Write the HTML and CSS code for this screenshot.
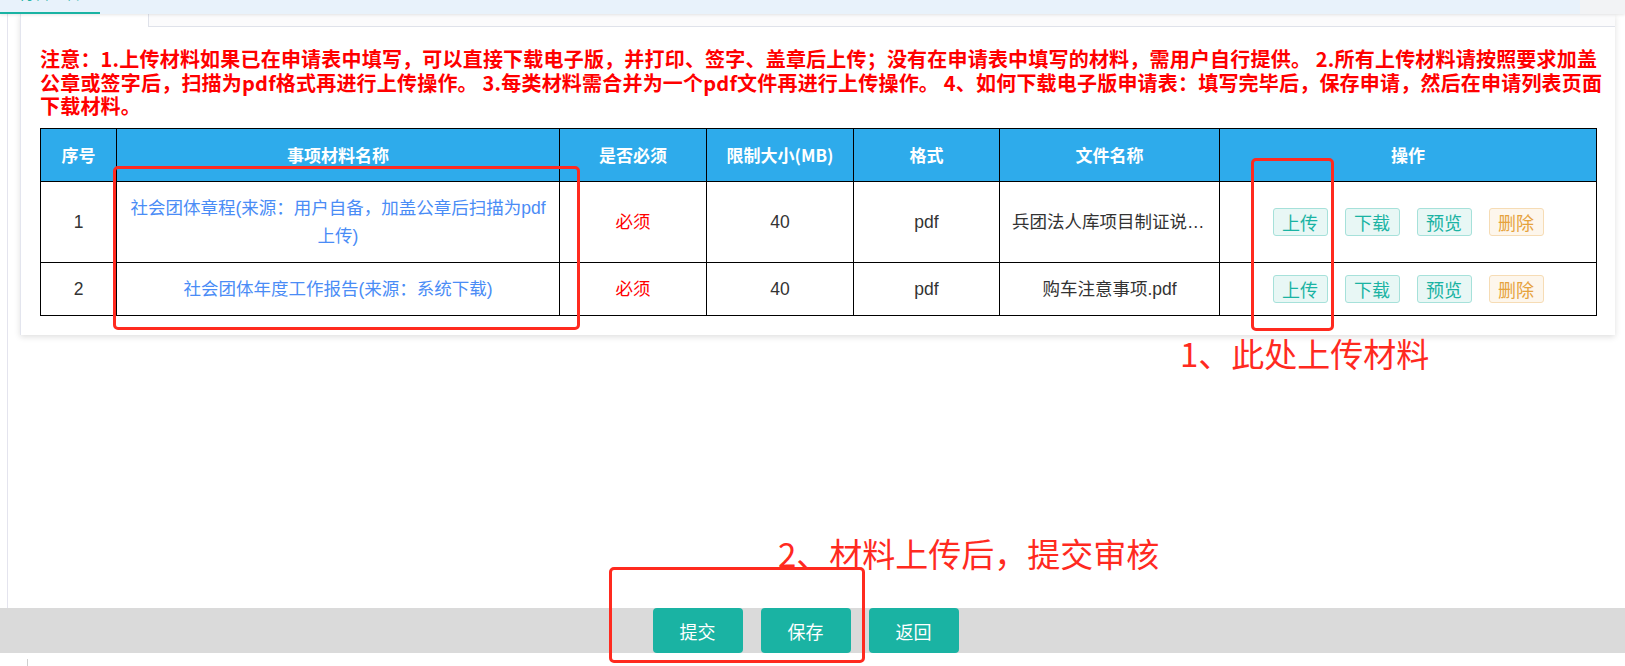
FILE: index.html
```html
<!DOCTYPE html>
<html lang="zh-CN">
<head>
<meta charset="utf-8">
<title>材料上传</title>
<link rel="stylesheet" href="styles.css">
</head>
<body>
<div class="page">
  <div class="topbar">
    <div class="tab"><span class="tab-label">材料上传</span></div>
    <div class="topbar-fill"></div>
    <div class="topbar-end"></div>
  </div>
  <div class="workspace">
    <div class="rail"></div>
    <div class="content">
      <div class="card">
        <div class="card-tabs"><div class="card-tabs-box"></div></div>
        <p class="notice">注意：1.上传材料如果已在申请表中填写，可以直接下载电子版，并打印、签字、盖章后上传；没有在申请表中填写的材料，需用户自行提供。 2.所有上传材料请按照要求加盖<br>公章或签字后，扫描为pdf格式再进行上传操作。 3.每类材料需合并为一个pdf文件再进行上传操作。 4、如何下载电子版申请表：填写完毕后，保存申请，然后在申请列表页面<br>下载材料。</p>
        <table class="materials">
          <colgroup>
            <col class="c-no"><col class="c-name"><col class="c-req"><col class="c-size"><col class="c-fmt"><col class="c-file"><col class="c-ops">
          </colgroup>
          <thead>
            <tr><th>序号</th><th>事项材料名称</th><th>是否必须</th><th>限制大小(MB)</th><th>格式</th><th>文件名称</th><th>操作</th></tr>
          </thead>
          <tbody>
            <tr class="row-tall">
              <td>1</td>
              <td class="name">社会团体章程(来源：用户自备，加盖公章后扫描为pdf上传)</td>
              <td class="req">必须</td>
              <td>40</td>
              <td>pdf</td>
              <td><div class="file">兵团法人库项目制证说明.pdf</div></td>
              <td><div class="ops"><span class="op">上传</span><span class="op">下载</span><span class="op">预览</span><span class="op op-warn">删除</span></div></td>
            </tr>
            <tr>
              <td>2</td>
              <td class="name">社会团体年度工作报告(来源：系统下载)</td>
              <td class="req">必须</td>
              <td>40</td>
              <td>pdf</td>
              <td><div class="file">购车注意事项.pdf</div></td>
              <td><div class="ops"><span class="op">上传</span><span class="op">下载</span><span class="op">预览</span><span class="op op-warn">删除</span></div></td>
            </tr>
          </tbody>
        </table>
      </div>
    </div>
  </div>
  <div class="footer">
    <button class="btn">提交</button>
    <button class="btn">保存</button>
    <button class="btn">返回</button>
  </div>
  <div class="bottom-strip"><span class="tick"></span></div>

  <div class="mark mark-names"></div>
  <div class="mark mark-upload"></div>
  <div class="mark mark-submit"></div>
  <div class="note note-upload">1、此处上传材料</div>
  <div class="note note-submit">2、材料上传后，提交审核</div>
</div>
</body>
</html>
```
FILE: styles.css
```css
* { box-sizing: border-box; }

html, body {
  margin: 0;
  padding: 0;
  background: #ffffff;
}

body {
  font-family: "Noto Sans CJK SC", "Noto Sans", sans-serif;
  color: #333333;
}

.page {
  position: relative;
  width: 1625px;
  height: 666px;
  overflow: hidden;
  background: #ffffff;
}

/* top bar */
.topbar {
  display: flex;
  height: 14px;
  position: relative;
  z-index: 2;
  box-shadow: 0 1px 3px rgba(0, 0, 0, 0.10);
}
.tab {
  width: 100px;
  height: 14px;
  background: #e8f2fb;
  border-bottom: 2px solid #1ab3a3;
  overflow: hidden;
}
.tab-label {
  display: block;
  margin-top: -18px;
  padding-left: 18px;
  font-size: 16px;
  line-height: 20px;
  color: #1ab3a3;
  white-space: nowrap;
}
.topbar-fill {
  flex: 1;
  background: #e8f2fb;
}
.topbar-end {
  width: 45px;
  background: #f2f3f5;
}

/* workspace */
.workspace {
  display: flex;
  height: 594px;
}
.rail {
  width: 8px;
  border-right: 1px solid #e4e4ee;
}
.content {
  flex: 1;
  padding-left: 12px;
  padding-right: 10px;
}
.card {
  width: 1595px;
  background: #ffffff;
  border-left: 1px solid #e3e5ee;
  box-shadow: 0 2px 6px rgba(0, 0, 0, 0.13);
  padding: 0 19px 19px 19px;
}
.card-tabs {
  height: 13px;
  margin: 0 -19px 0 108px;
}
.card-tabs-box {
  height: 13px;
  border-left: 1px solid #dfe2ea;
  border-bottom: 1px solid #dfe2ea;
  background: #fbfbfc;
}

.notice {
  margin: 20px 0 10px 0;
  font-size: 20px;
  line-height: 23.5px;
  font-weight: 700;
  letter-spacing: 0.2px;
  color: #ff0000;
  white-space: nowrap;
}

/* table */
.materials {
  width: 1556px;
  border-collapse: collapse;
  table-layout: fixed;
  font-family: "Liberation Sans", "Noto Sans CJK SC", sans-serif;
  font-size: 17.5px;
}
.c-no { width: 76px; }
.c-name { width: 443px; }
.c-req { width: 147px; }
.c-size { width: 147px; }
.c-fmt { width: 146px; }
.c-file { width: 220px; }
.c-ops { width: 377px; }

.materials th,
.materials td {
  border: 1px solid #000000;
  text-align: center;
  vertical-align: middle;
}
.materials th {
  background: #2eabeb;
  color: #ffffff;
  font-family: "Noto Sans CJK SC", "Noto Sans", sans-serif;
  font-weight: 700;
  font-size: 17px;
  line-height: 24px;
  padding: 14px 4px;
}
.materials td {
  color: #333333;
  line-height: 28px;
  padding: 12px 12px;
}
.materials td.name {
  color: #4a8cf6;
}
.materials td.req {
  color: #ff0000;
}
.file {
  white-space: nowrap;
  overflow: hidden;
  text-overflow: ellipsis;
}
.ops {
  display: flex;
  justify-content: center;
  gap: 17px;
}
.op {
  width: 55px;
  height: 28px;
  border: 1px solid #a6e1da;
  border-radius: 3px;
  background: #e8f7f5;
  color: #1ab3a3;
  font-family: "Noto Sans CJK SC", "Noto Sans", sans-serif;
  font-size: 18px;
  line-height: 26px;
  text-align: center;
}
.op-warn {
  border-color: #f6dcb5;
  background: #fdf6ec;
  color: #e6a23c;
}

/* footer */
.footer {
  display: flex;
  justify-content: center;
  gap: 18px;
  height: 45px;
  padding-right: 14px;
  background: #dadada;
}
.btn {
  width: 90px;
  height: 45px;
  border: none;
  border-radius: 4px;
  background: #1ab3a3;
  color: #ffffff;
  font-family: "Noto Sans CJK SC", "Noto Sans", sans-serif;
  font-size: 18px;
  padding: 0;
}
.bottom-strip {
  height: 13px;
  padding: 6px 0 0 27px;
}
.tick {
  display: block;
  width: 1px;
  height: 7px;
  background: #cfcfcf;
}

/* annotations */
.mark {
  position: absolute;
  border: 3px solid #ff2a1f;
  border-radius: 5px;
}
.mark-names {
  left: 113px;
  top: 166px;
  width: 467px;
  height: 164px;
}
.mark-upload {
  left: 1251px;
  top: 158px;
  width: 83px;
  height: 173px;
}
.mark-submit {
  left: 609px;
  top: 567px;
  width: 256px;
  height: 96px;
}
.note {
  position: absolute;
  font-size: 33px;
  line-height: 33px;
  color: #ff2a1f;
  white-space: nowrap;
}
.note-upload {
  left: 1180px;
  top: 337px;
}
.note-submit {
  left: 778px;
  top: 537px;
}
```
